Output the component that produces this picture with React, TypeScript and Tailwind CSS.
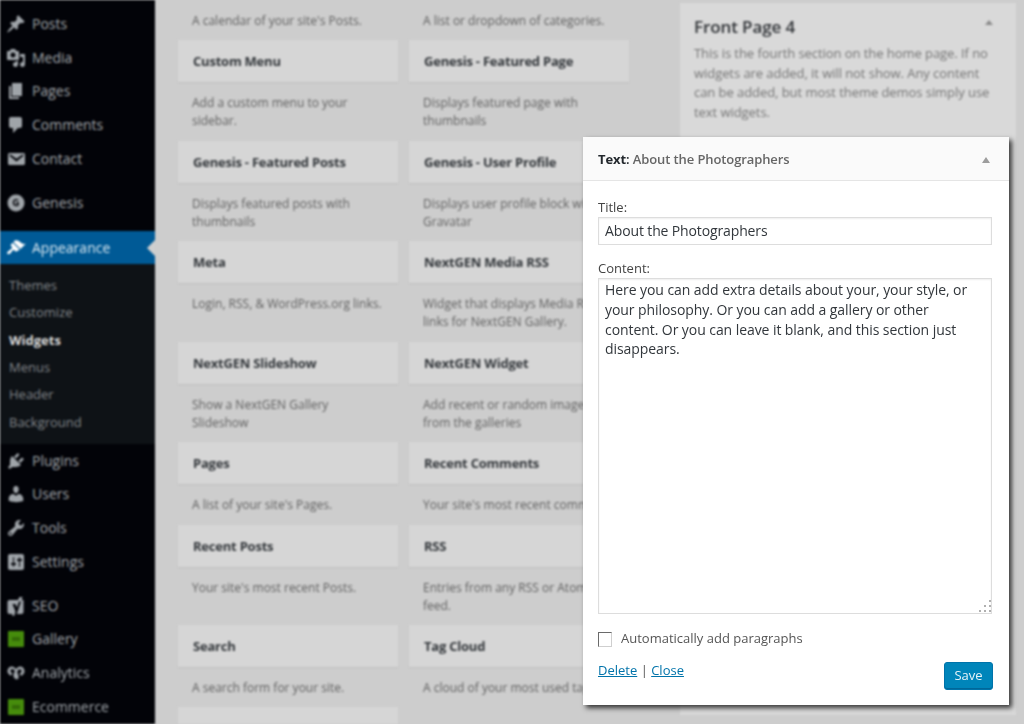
const P: Record<string, string> = {
  post: "M10.44 3.02l1.82-1.82 6.36 6.35-1.83 1.82c-1.05-.68-2.48-.57-3.41.36l-.75.75c-.92.93-1.04 2.35-.35 3.41l-1.83 1.82-2.41-2.41-2.8 2.79c-.42.42-3.38 2.71-3.8 2.29s1.86-3.39 2.28-3.81l2.79-2.79L4.1 9.36l1.83-1.82c1.05.69 2.48.57 3.4-.36l.75-.75c.93-.92 1.05-2.35.36-3.41z",
  media: "M13 11V4c0-.55-.45-1-1-1h-1.67L9 1H5L3.67 3H2c-.55 0-1 .45-1 1v7c0 .55.45 1 1 1h10c.55 0 1-.45 1-1zM7 4.5c1.38 0 2.5 1.12 2.5 2.5S8.38 9.5 7 9.5 4.5 8.38 4.5 7 5.62 4.5 7 4.5zM14 6h5v10.5c0 1.38-1.12 2.5-2.5 2.5S14 17.88 14 16.5s1.12-2.5 2.5-2.5c.17 0 .34.02.5.05V9h-3V6zm-4 8.05V13h2v3.5c0 1.38-1.12 2.5-2.5 2.5S7 17.88 7 16.5 8.12 14 9.5 14c.17 0 .34.02.5.05z",
  page: "M6 15V2h10v13H6zm-1 1h8v2H3V5h2v11z",
  comment: "M5 2h9c1.1 0 2 .9 2 2v7c0 1.1-.9 2-2 2h-2l-5 5v-5H5c-1.1 0-2-.9-2-2V4c0-1.1.9-2 2-2z",
  email: "M3.87 4h13.25C18.37 4 19 4.59 19 5.79v8.42c0 1.19-.63 1.79-1.88 1.79H3.87c-1.25 0-1.88-.6-1.88-1.79V5.79c0-1.2.63-1.79 1.88-1.79zm6.62 8.6l6.74-5.53c.24-.2.43-.66.13-1.07-.29-.41-.82-.42-1.17-.17l-5.7 3.86L4.8 5.83c-.35-.25-.88-.24-1.17.17-.3.41-.11.87.13 1.07z",
  genesis: "M10 1.5a8.5 8.5 0 1 0 0 17 8.5 8.5 0 0 0 0-17zm.2 4.5c1 0 1.8.3 2.4.8l-.8 1c-.4-.3-.9-.5-1.5-.5-1.2 0-2 .9-2 2.2s.8 2.2 2 2.2c.4 0 .7-.1 1-.2v-1.3h-1.2V9h2.6v3.4c-.6.5-1.5.8-2.5.8-2.1 0-3.4-1.4-3.4-3.6S8.1 6 10.2 6z",
  brush: "M14.48 11.06L7.41 3.99l1.5-1.5c.5-.56 2.3-.47 3.51.32 1.21.8 1.43 1.28 2.91 2.1 1.18.64 2.45 1.26 4.45.85zm-.71.71L6.7 4.7 4.93 6.47c-.39.39-.39 1.02 0 1.41l1.06 1.06c.39.39.39 1.03 0 1.42-.6.6-1.43 1.11-2.21 1.69-.35.26-.7.53-1.01.84C1.43 13.23.91 14.86 1.1 15.5c.19.63 1.84 1.13 3.17 0 .31-.31.59-.66.84-1.01.58-.78 1.09-1.61 1.69-2.21.39-.39 1.03-.39 1.42 0l1.06 1.06c.39.39 1.02.39 1.41 0z",
  plugin: "M13.11 4.36L9.87 7.6 8 5.73l3.24-3.24c.35-.34 1.05-.2 1.56.32.52.51.66 1.21.31 1.55zm-8 1.77l.91-1.12 9.01 9.01-1.19.84c-.71.71-2.63 1.16-3.82 1.16H6.14L4.9 17.26c-.59.59-1.54.59-2.12 0-.59-.58-.59-1.53 0-2.12l1.24-1.24v-3.88c0-1.13.4-3.19 1.09-3.89zm7.26 3.97l3.24-3.24c.34-.35 1.04-.21 1.55.31.52.51.66 1.21.31 1.55l-3.24 3.25z",
  users: "M10 9.25c-2.27 0-2.73-3.44-2.73-3.44C7 4.02 7.82 2 9.97 2c2.16 0 2.98 2.02 2.71 3.81 0 0-.41 3.44-2.68 3.44zm0 2.57L12.72 10c2.39 0 4.52 2.33 4.52 4.53v2.49s-3.65 1.13-7.24 1.13c-3.65 0-7.24-1.13-7.24-1.13v-2.49c0-2.25 1.94-4.48 4.47-4.48z",
  tools: "M16.68 9.77c-1.34 1.34-3.3 1.67-4.95.99l-5.41 6.52c-.99.99-2.59.99-3.58 0s-.99-2.59 0-3.57l6.52-5.42c-.68-1.65-.35-3.61.99-4.95 1.28-1.28 3.12-1.62 4.72-1.06l-2.89 2.89 2.82 2.82 2.86-2.87c.53 1.58.18 3.39-1.08 4.65zM3.81 16.21c.4.39 1.04.39 1.43 0 .4-.4.4-1.04 0-1.43-.39-.4-1.03-.4-1.43 0-.39.39-.39 1.03 0 1.43z",
  settings: "M18 16V4c0-1.1-.9-2-2-2H4c-1.1 0-2 .9-2 2v12c0 1.1.9 2 2 2h12c1.1 0 2-.9 2-2zM8 11h1c.55 0 1 .45 1 1s-.45 1-1 1H8v1.5c0 .28-.22.5-.5.5s-.5-.22-.5-.5V13H6c-.55 0-1-.45-1-1s.45-1 1-1h1V5.5c0-.28.22-.5.5-.5s.5.22.5.5V11zm5-2h-1c-.55 0-1-.45-1-1s.45-1 1-1h1V5.5c0-.28.22-.5.5-.5s.5.22.5.5V7h1c.55 0 1 .45 1 1s-.45 1-1 1h-1v5.5c0 .28-.22.5-.5.5s-.5-.22-.5-.5V9z",
  seo: "M3.5 4H12l1.5-3h3.2L15.5 4H17.5v12c0 1.1-.9 2-2 2H9l-1 2-2-.5.5-1.5H3.5c-1.1 0-2-.9-2-2V6c0-1.1.9-2 2-2zm3 4l3 7.5L8.8 18h2l4.2-12.5h-2L11 11.5 9.3 8z",
  analytics: "M3 4.5C4.5 3 7 3 8.5 4.5L10 6l1.5-1.5C13 3 15.5 3 17 4.5c2 2 2 5 .5 6.5l-2 2-2-2 1.5-1.5c.7-.7.7-2 0-2.7-.7-.7-1.8-.7-2.5 0l-1 1v3l1 1v4L10 16.5 7.5 14v-3.500l1-1v-2.500l-1-.5c-.7-.7-1.800-.7-2.500 0-.7.7-.7 2 0 2.700l1.500 1.500-2 2-2-2C1 9.500 1 6.500 3 4.500z",
};

function Icon({ name, cls = "text-[#9fa4a9]" }: { name: string; cls?: string }) {
  return (
    <svg viewBox="0 0 20 20" className={`w-5 h-5 shrink-0 fill-current ${cls}`}>
      <path d={P[name]} />
    </svg>
  );
}

function GreenIcon() {
  return (
    <div className="w-4 h-4 mx-0.5 shrink-0 bg-[#468c0c] rounded-[1px] flex items-center justify-center">
      <div className="w-2 h-1 bg-[#336a08]" />
    </div>
  );
}

function MenuItem({ icon, label, green }: { icon?: string; label: string; green?: boolean }) {
  return (
    <div className="h-[33.7px] flex items-center pl-[6px] gap-[6px] text-[#a3a8ad]">
      {green ? <GreenIcon /> : <Icon name={icon!} />}
      <span className="text-sm">{label}</span>
    </div>
  );
}

function Sidebar() {
  return (
    <div className="w-[155px] shrink-0 bg-[#020308] pt-[7px]">
      <MenuItem icon="post" label="Posts" />
      <MenuItem icon="media" label="Media" />
      <MenuItem icon="page" label="Pages" />
      <MenuItem icon="comment" label="Comments" />
      <MenuItem icon="email" label="Contact" />
      <div className="h-[11px]" />
      <MenuItem icon="genesis" label="Genesis" />
      <div className="h-[11px]" />
      <div className="relative h-[33px] bg-[#005a96] flex items-center pl-[6px] gap-[6px] text-[#dbe8f0]">
        <Icon name="brush" cls="text-white" />
        <span className="text-sm">Appearance</span>
        <div className="absolute right-0 top-[9px] w-0 h-0 border-y-[8px] border-y-transparent border-r-[8px] border-r-[#cfcfcf]" />
      </div>
      <div className="bg-[#0e1216] pt-[8px] pb-[8px] text-[13px] text-[#83878b]">
        {["Themes", "Customize", "Widgets", "Menus", "Header", "Background"].map((s) => (
          <div key={s} className={`h-[27.3px] flex items-center pl-[9px] ${s === "Widgets" ? "font-bold text-[#dcdcdc]" : ""}`}>
            {s}
          </div>
        ))}
      </div>
      <MenuItem icon="plugin" label="Plugins" />
      <MenuItem icon="users" label="Users" />
      <MenuItem icon="tools" label="Tools" />
      <MenuItem icon="settings" label="Settings" />
      <div className="h-[10px]" />
      <MenuItem icon="seo" label="SEO" />
      <MenuItem green label="Gallery" />
      <MenuItem icon="analytics" label="Analytics" />
      <MenuItem green label="Ecommerce" />
    </div>
  );
}

function Widget({ title, desc, nowrap }: { title: string; desc: string; nowrap?: boolean }) {
  return (
    <div className="w-[220px]">
      <div className="h-[42px] pt-px bg-[#d6d6d6] flex items-center px-[15px] text-[13px] font-bold tracking-[-0.22px] text-[#33373b] shadow-[0_1px_1px_rgba(0,0,0,0.06)]">
        {title}
      </div>
      <p className={`pt-[12px] px-[14px] text-xs leading-[18px] text-[#616161] ${nowrap ? "whitespace-nowrap" : ""}`}>{desc}</p>
    </div>
  );
}

const rows: { a: [string, string]; b: [string, string]; h: string }[] = [
  { a: ["Custom Menu", "Add a custom menu to your sidebar."], b: ["Genesis - Featured Page", "Displays featured page with thumbnails"], h: "h-[101px]" },
  { a: ["Genesis - Featured Posts", "Displays featured posts with thumbnails"], b: ["Genesis - User Profile", "Displays user profile block with Gravatar"], h: "h-[100px]" },
  { a: ["Meta", "Login, RSS, & WordPress.org links."], b: ["NextGEN Media RSS", "Widget that displays Media RSS links for NextGEN Gallery."], h: "h-[101px]" },
  { a: ["NextGEN Slideshow", "Show a NextGEN Gallery Slideshow"], b: ["NextGEN Widget", "Add recent or random images from the galleries"], h: "h-[100px]" },
  { a: ["Pages", "A list of your site's Pages."], b: ["Recent Comments", "Your site's most recent comments."], h: "h-[83px]" },
  { a: ["Recent Posts", "Your site's most recent Posts."], b: ["RSS", "Entries from any RSS or Atom feed."], h: "h-[100px]" },
  { a: ["Search", "A search form for your site."], b: ["Tag Cloud", "A cloud of your most used tags."], h: "h-[82px]" },
];

function WidgetGrid() {
  return (
    <div className="w-[452px] ml-[23px] shrink-0">
      <div className="h-[40px] flex gap-[11px] text-xs text-[#616161] items-center">
        <p className="w-[220px] px-[14px] pt-[1px]">A calendar of your site's Posts.</p>
        <p className="w-[220px] px-[14px] pt-[1px]">A list or dropdown of categories.</p>
      </div>
      {rows.map((r) => (
        <div key={r.a[0]} className={`flex gap-[11px] ${r.h}`}>
          <Widget title={r.a[0]} desc={r.a[1]} nowrap={r.a[0] === "Meta"} />
          <Widget title={r.b[0]} desc={r.b[1]} nowrap={r.b[0] === "Recent Comments"} />
        </div>
      ))}
      <div className="w-[220px] h-[42px] bg-[#d6d6d6]" />
    </div>
  );
}

function FrontPanel() {
  return (
    <div className="w-[336px] h-[712px] ml-[50px] mt-[3px] shrink-0 bg-[#d9d9d9] px-[14px] pt-[12px]">
      <div className="flex items-center justify-between pr-[9px]">
        <h3 className="text-[17px] leading-[24px] font-semibold tracking-[-0.1px] text-[#303337]">Front Page 4</h3>
        <div className="w-0 h-0 mb-[10px] border-x-[4px] border-x-transparent border-b-[5px] border-b-[#8a8a8a]" />
      </div>
      <p className="mt-[5px] text-[13px] leading-[19.5px] tracking-[-0.06px] text-[#757575]">
        This is the fourth section on the home page. If no widgets are added, it will not show. Any content can be added, but most theme demos simply use text widgets.
      </p>
    </div>
  );
}

function Popup() {
  return (
    <div className="absolute left-[583px] top-[137px] w-[426px] h-[568px] bg-white shadow-[3px_3px_5px_rgba(0,0,0,0.75)] text-[#444]">
      <div className="h-[44px] pt-[2px] bg-[#fafafa] border-b border-[#e5e5e5] flex items-center justify-between pl-[15px] pr-[19px] text-[13px] tracking-[-0.1px]">
        <div className="font-semibold text-[#666]">
          <span className="font-bold text-[#23282d]">Text</span>
          <span className="text-[#23282d]">:</span> About the Photographers
        </div>
        <div className="w-0 h-0 border-x-[4px] border-x-transparent border-b-[6px] border-b-[#9d9d9d]" />
      </div>
      <div className="px-[15px] pt-[17px]">
        <label className="block text-[13px] leading-[18px]">Title:</label>
        <input
          readOnly
          value="About the Photographers"
          className="block w-[394px] h-[28px] mt-px border border-[#ddd] px-[6px] pb-[2px] text-sm tracking-[-0.13px] text-[#32373c] outline-none shadow-[inset_0_1px_2px_rgba(0,0,0,0.07)]"
        />
        <label className="block mt-[14px] text-[13px] leading-[18px]">Content:</label>
        <div className="relative mt-px">
          <textarea
            readOnly
            defaultValue="Here you can add extra details about your, your style, or your philosophy. Or you can add a gallery or other content. Or you can leave it blank, and this section just disappears."
            className="block w-[394px] h-[336px] border border-[#ddd] px-[6px] py-px text-sm leading-[19.8px] tracking-[-0.07px] text-[#32373c] resize-none outline-none shadow-[inset_0_1px_2px_rgba(0,0,0,0.07)]"
          />
          <svg viewBox="0 0 14 14" className="absolute right-[1px] bottom-[1px] w-[14px] h-[14px] fill-[#b0b0b0]">
            <rect x="10" y="1" width="2" height="2" />
            <rect x="5" y="6" width="2" height="2" />
            <rect x="10" y="6" width="2" height="2" />
            <rect x="0" y="11" width="2" height="2" />
            <rect x="5" y="11" width="2" height="2" />
            <rect x="10" y="11" width="2" height="2" />
          </svg>
        </div>
        <div className="flex items-center mt-[17px] h-[16px] gap-[8px]">
          <div className="w-[14px] h-[15px] border border-[#6a6a6a] border-r-[#cfcfcf] border-b-[#cfcfcf] bg-white shrink-0 mr-px" />
          <span className="text-[13px] text-[#555]">Automatically add paragraphs</span>
        </div>
        <div className="flex justify-between mt-[16px] pr-px">
          <div className="text-[13px] -mt-[2px] leading-[18px] text-[#555]">
            <span className="text-[#0073aa] underline">Delete</span> | <span className="text-[#0073aa] underline">Close</span>
          </div>
          <button className="w-[49px] h-[28px] -mt-[1px] bg-[#0085ba] border border-[#0073aa] rounded-[3px] text-[13px] text-[#e6f3f8] shadow-[inset_0_-1px_0_#006799]">
            Save
          </button>
        </div>
      </div>
    </div>
  );
}

export default function App() {
  return (
    <div className="relative w-[1024px] h-[724px] overflow-hidden bg-[#cdcdcd] font-['Open_Sans',sans-serif]">
      <div className="flex w-[1024px] h-[724px] overflow-hidden blur-[1px]">
        <Sidebar />
        <div className="min-w-0 flex">
          <WidgetGrid />
          <FrontPanel />
        </div>
      </div>
      <Popup />
    </div>
  );
}
